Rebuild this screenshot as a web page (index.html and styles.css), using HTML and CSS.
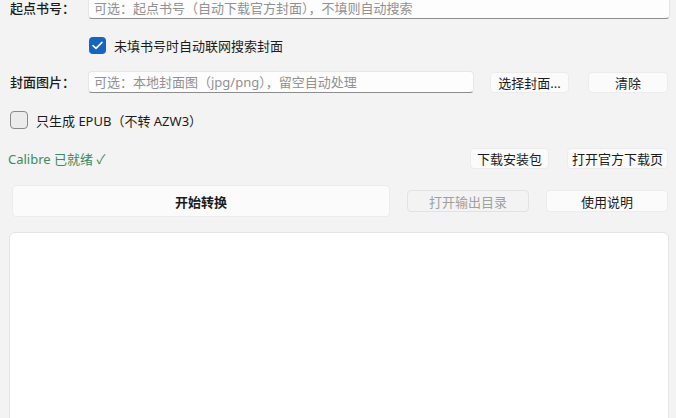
FILE: index.html
```html
<!DOCTYPE html>
<html lang="zh-CN">

<head>
    <meta charset="UTF-8" />
    <title>起点转 Kindle</title>
    <meta name="viewport" content="width=device-width, initial-scale=1.0" />
    <link rel="stylesheet" href="styles.css">
</head>

<body>

    <div class="panel">

        <!-- 书号 -->
        <div class="field-row first">
            <label class="field-label">起点书号：</label>
            <input class="text-input" type="text" placeholder="可选：起点书号（自动下载官方封面），不填则自动搜索" />
        </div>

        <div class="check-row indent">
            <span class="check checked">
                <svg width="11" height="9" viewBox="0 0 11 9"><path d="M1 4.6 L4 7.4 L10 1.4" fill="none" stroke="#fff" stroke-width="1.5" stroke-linecap="round" stroke-linejoin="round"/></svg>
            </span>
            <span>未填书号时自动联网搜索封面</span>
        </div>

        <!-- 封面 -->
        <div class="field-row cover">
            <label class="field-label">封面图片：</label>
            <input class="text-input" type="text" placeholder="可选：本地封面图（jpg/png），留空自动处理" />
            <button class="btn w79">选择封面...</button>
            <button class="btn w80">清除</button>
        </div>

        <div class="check-row">
            <span class="check"></span>
            <span>只生成 EPUB（不转 AZW3）</span>
        </div>

        <!-- Calibre 状态 -->
        <div class="status-row">
            <span class="status-ok">Calibre 已就绪 ✓</span>
            <button class="btn w79">下载安装包</button>
            <button class="btn w101">打开官方下载页</button>
        </div>

        <div class="action-row">
            <button class="btn primary">开始转换</button>
            <button class="btn" disabled>打开输出目录</button>
            <button class="btn">使用说明</button>
        </div>

        <!-- 日志 -->
        <div class="log"></div>

    </div>

</body>

</html>
```

FILE: styles.css
```css
body {
    margin: 0;
    background: #f3f3f3;
    font-family: 'Noto Sans', 'Noto Sans CJK SC', sans-serif;
    font-size: 13px;
    color: #1b1b1b;
    overflow: hidden;
    height: 418px;
}

.panel {
    display: flex;
    flex-direction: column;
    padding: 0 8px 0 10px;
}

.field-row {
    display: flex;
    align-items: center;
    height: 22px;
}

.field-row.first {
    margin-top: -3px;
    margin-right: -2px;
}

.field-row.cover {
    margin-top: 17px;
    gap: 16px;
}

.field-row.cover .btn + .btn {
    margin-left: 3px;
}

.field-label {
    width: 78px;
    flex: none;
    font-weight: 500;
    line-height: 22px;
}

.field-row.cover .field-label {
    margin-right: -16px;
}

.text-input {
    flex: 1;
    min-width: 0;
    height: 22px;
    box-sizing: border-box;
    padding: 0 5px 1px;
    font: inherit;
    font-size: 13px;
    background: #fdfdfd;
    border: 1px solid #e6e6e6;
    border-bottom-color: #8d8d8d;
    border-radius: 4px;
    outline: none;
}

.text-input::placeholder {
    color: #919191;
}

.check-row {
    display: flex;
    align-items: center;
    gap: 8px;
    margin-top: 18px;
    height: 18px;
}

.check-row.indent {
    padding-left: 79px;
    height: 17px;
}

.check {
    width: 18px;
    height: 18px;
    box-sizing: border-box;
    border: 1px solid #8a8a8a;
    border-radius: 4px;
    background: #ececec;
    display: flex;
    align-items: center;
    justify-content: center;
}

.check.checked {
    width: 17px;
    height: 17px;
    border: none;
    background: #1565c0;
}

.btn {
    height: 21px;
    box-sizing: border-box;
    padding: 0;
    font: inherit;
    font-size: 13px;
    color: #1b1b1b;
    background: #fbfbfb;
    border: 1px solid #ececec;
    border-radius: 4px;
    cursor: pointer;
}

.btn.w79 { width: 79px; flex: none; }
.btn.w80 { width: 80px; flex: none; }
.btn.w101 { width: 101px; flex: none; }

.btn:disabled {
    color: #a0a0a0;
    background: transparent;
    border-color: #e2e2e2;
}

.status-row {
    display: flex;
    align-items: center;
    gap: 18px;
    margin-top: 19px;
    margin-left: -2px;
}

.status-ok {
    flex: 1;
    color: #3d8a5c;
}

.action-row {
    display: grid;
    grid-template-columns: 1fr 122px 122px;
    column-gap: 17px;
    align-items: center;
    margin-top: 16px;
    margin-left: 2px;
}

.action-row .btn {
    height: 22px;
}

.action-row .btn.primary {
    height: 32px;
    font-weight: 700;
}

.log {
    margin: 15px -1px 0 -1px;
    height: 200px;
    background: #fff;
    border: 1px solid #e4e4e4;
    border-radius: 6px;
}
```
